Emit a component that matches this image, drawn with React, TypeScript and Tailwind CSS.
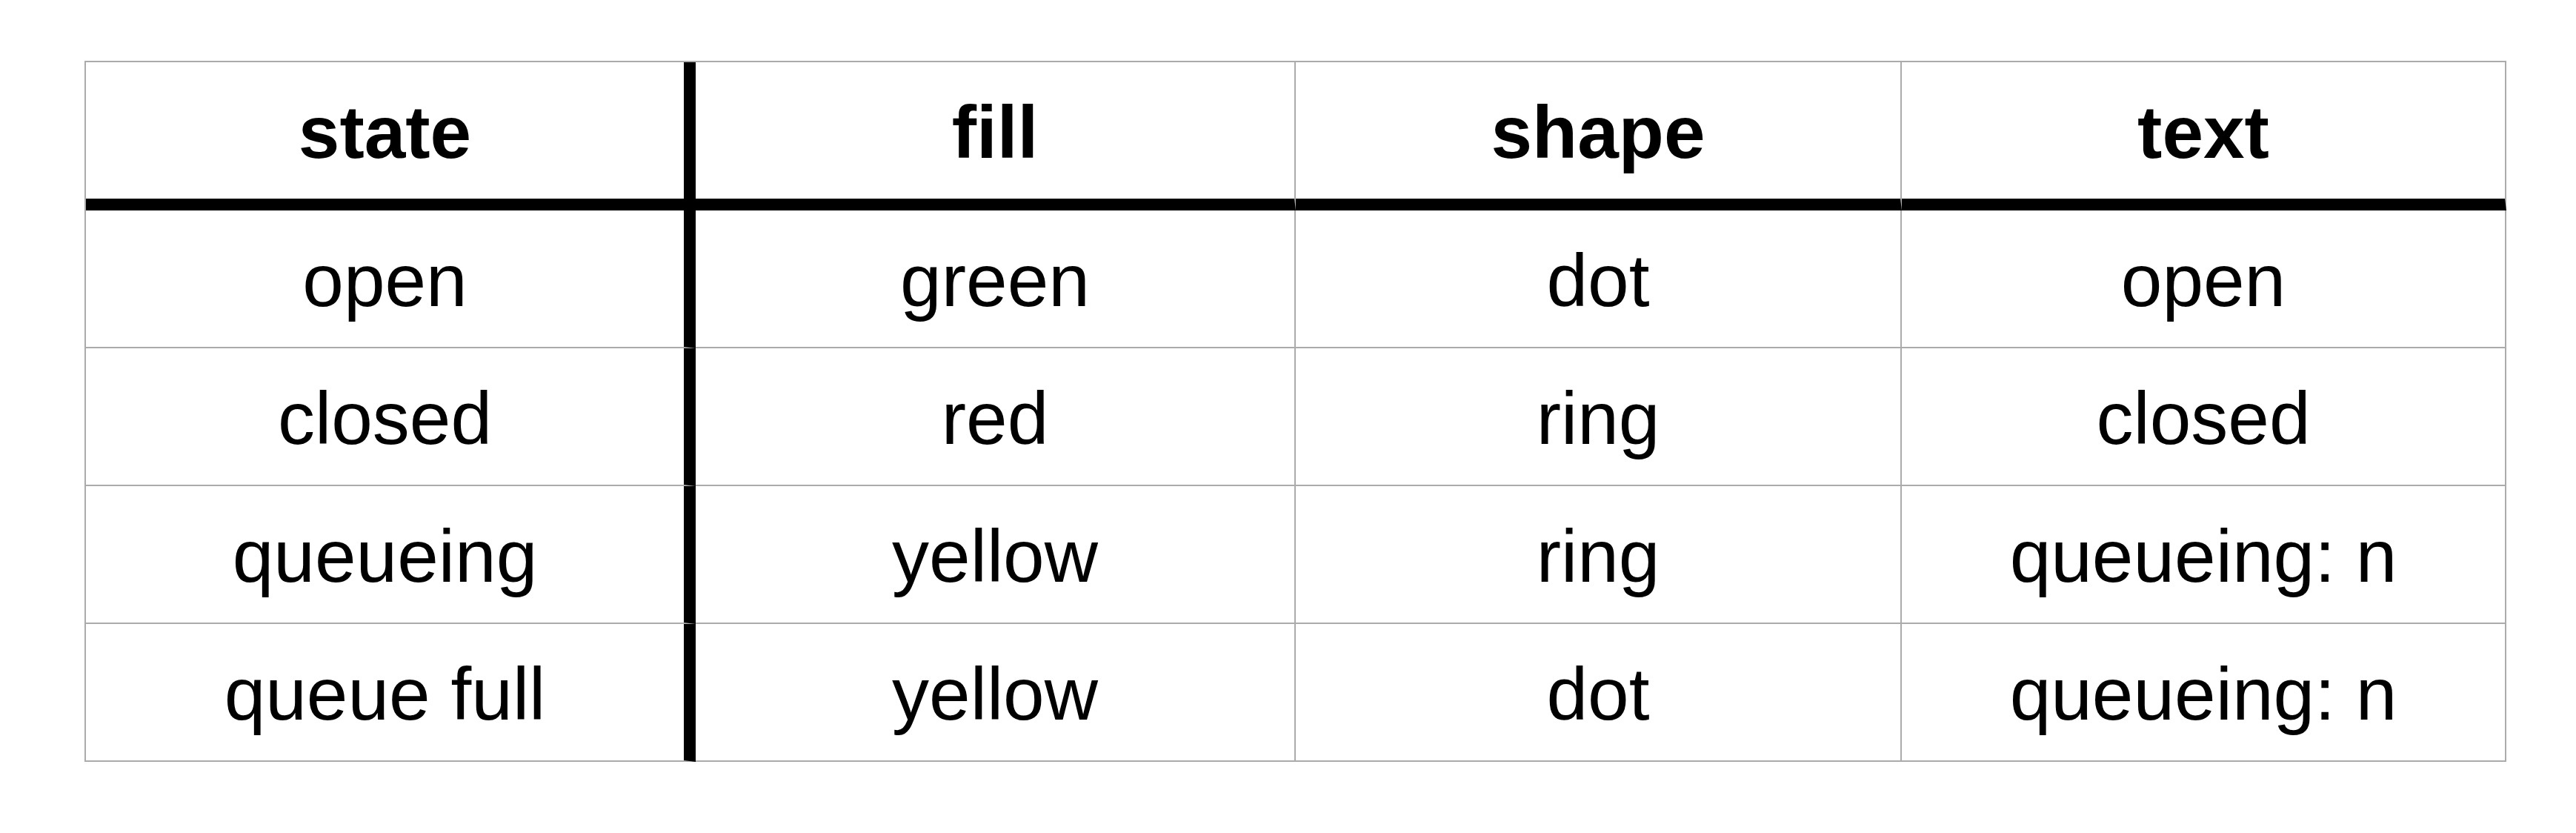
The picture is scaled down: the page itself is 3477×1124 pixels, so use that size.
const HEAD = ["state", "fill", "shape", "text"];

const ROWS = [
  ["open", "green", "dot", "open"],
  ["closed", "red", "ring", "closed"],
  ["queueing", "yellow", "ring", "queueing: n"],
  ["queue full", "yellow", "dot", "queueing: n"],
];

function Cell({ text, col, head }: { text: string; col: number; head?: boolean }) {
  const right = col === 0 ? "border-r-[16px] border-r-black" : "border-r-2 border-r-[#ababab]";
  const bottom = head ? "border-b-[16px] border-b-black" : "border-b-2 border-b-[#ababab]";
  return (
    <div className={`flex items-center justify-center pt-1 ${right} ${bottom}`}>
      <span className={`text-[100px] leading-none text-black ${head ? "font-bold" : "font-normal"}`}>
        {text}
      </span>
    </div>
  );
}

export default function App() {
  return (
    <div className="min-h-[1124px] w-[3477px] bg-white pl-[114px] pt-[82px] font-['Liberation_Sans','Arial',sans-serif]">
      <div className="grid w-[3269px] grid-cols-[823px_810px_818px_816px] grid-rows-[200px_186px_186px_186px_186px] border-l-2 border-t-2 border-[#ababab]">
        {HEAD.map((h, i) => (
          <Cell key={h} text={h} col={i} head />
        ))}
        {ROWS.map((r, ri) =>
          r.map((c, ci) => <Cell key={`${ri}-${ci}`} text={c} col={ci} />)
        )}
      </div>
    </div>
  );
}
